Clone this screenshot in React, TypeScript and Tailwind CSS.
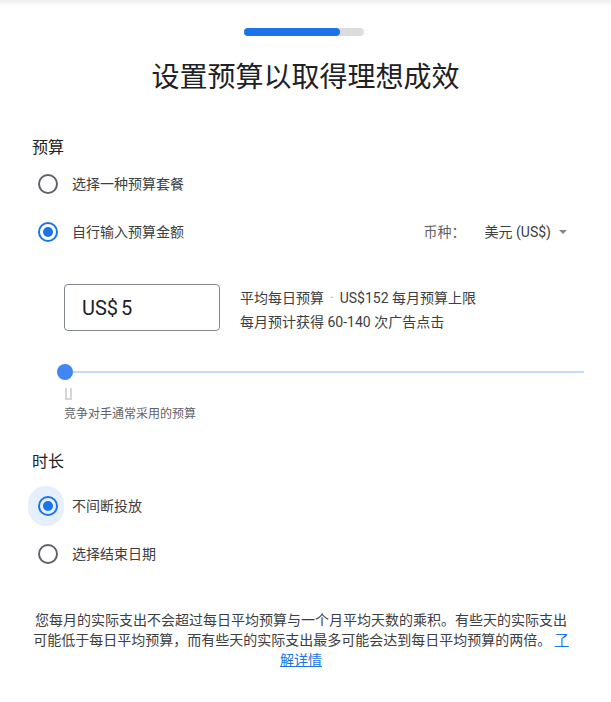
import React from "react";

const font = { fontFamily: 'Roboto, "Noto Sans CJK SC", "Noto Sans", sans-serif' };

type RadioProps = {
  label: string;
  checked?: boolean;
  focused?: boolean;
};

function Radio({ label, checked, focused }: RadioProps) {
  return (
    <div className="flex h-12 items-center">
      <div className="relative ml-[-4px] flex h-10 w-10 items-center justify-center">
        {focused && (
          <div className="absolute left-0 top-0 h-10 w-[36px] rounded-full bg-[#e6effc]" />
        )}
        <div
          className={
            checked
              ? "relative flex h-5 w-5 items-center justify-center rounded-full border-2 border-[#1a73e8]"
              : "relative h-5 w-5 rounded-full border-2 border-[#5f6368]"
          }
        >
          {checked && <div className="h-[10px] w-[10px] rounded-full bg-[#1a73e8]" />}
        </div>
      </div>
      <span className="ml-[4px] text-[14px] text-[#3c4043]">{label}</span>
    </div>
  );
}

export default function App() {
  return (
    <div className="min-h-screen bg-white" style={font}>
      <div className="h-[6px] bg-gradient-to-b from-[#ededed] to-white" />

      <div className="mt-[22px] flex justify-center">
        <div className="mr-[3px] h-2 w-[120px] rounded-full bg-[#dadce0]">
          <div className="h-2 w-[96px] rounded-full bg-[#1a73e8]" />
        </div>
      </div>

      <h1 className="mt-6 text-center text-[28px] leading-9 text-[#202124]">
        设置预算以取得理想成效
      </h1>

      <div className="px-8">
        <div className="mt-[40px] text-[16px] leading-6 text-[#202124]">预算</div>

        <Radio label="选择一种预算套餐" />

        <div className="flex items-center">
          <Radio label="自行输入预算金额" checked />
          <div className="ml-auto mr-[12px] flex items-center text-[14px]">
            <span className="text-[#5f6368]">币种：</span>
            <span className="ml-[19px] text-[#3c4043]">美元 (US$)</span>
            <svg width="8" height="4" viewBox="0 0 8 4" className="ml-[8px]">
              <path d="M0 0h8L4 4z" fill="#80868b" />
            </svg>
          </div>
        </div>

        <div className="ml-8 mt-[28px] flex items-start">
          <div className="flex h-[47px] w-[156px] items-center rounded-[4px] border border-[#80868b] pl-[17px] text-[20px] text-[#202124]">
            <span>US$</span>
            <span className="ml-[3px]">5</span>
          </div>
          <div className="ml-5 mt-[2px] text-[14px] leading-6 text-[#3c4043]">
            <div>
              平均每日预算<span className="mx-[6px] text-[#9aa0a6]">·</span>US$152 每月预算上限
            </div>
            <div>每月预计获得 60-140 次广告点击</div>
          </div>
        </div>

        <div className="ml-[25px] mt-[30px] flex h-4 w-[527px] items-center">
          <div className="h-4 w-4 shrink-0 rounded-full bg-[#4285f4]" />
          <div className="h-[2px] flex-1 bg-[#c6dafc]" />
        </div>

        <div className="ml-[33px] mt-2 h-[12px] w-[7px] border-2 border-t-0 border-[#d6d6d6]" />

        <div className="ml-8 mt-[6px] text-[12px] leading-4 text-[#5f6368]">竞争对手通常采用的预算</div>

        <div className="mt-[28px] text-[16px] leading-6 text-[#202124]">时长</div>

        <div className="mt-2">
          <Radio label="不间断投放" checked focused />
          <Radio label="选择结束日期" />
        </div>
      </div>

      <p className="ml-[32px] mt-[32px] w-[538px] text-center text-[14px] leading-5 text-[#3c4043]">
        您每月的实际支出不会超过每日平均预算与一个月平均天数的乘积。有些天的实际支出可能低于每日平均预算，而有些天的实际支出最多可能会达到每日平均预算的两倍。{" "}
        <a href="#" className="text-[#1a73e8] underline">
          了解详情
        </a>
      </p>
    </div>
  );
}
